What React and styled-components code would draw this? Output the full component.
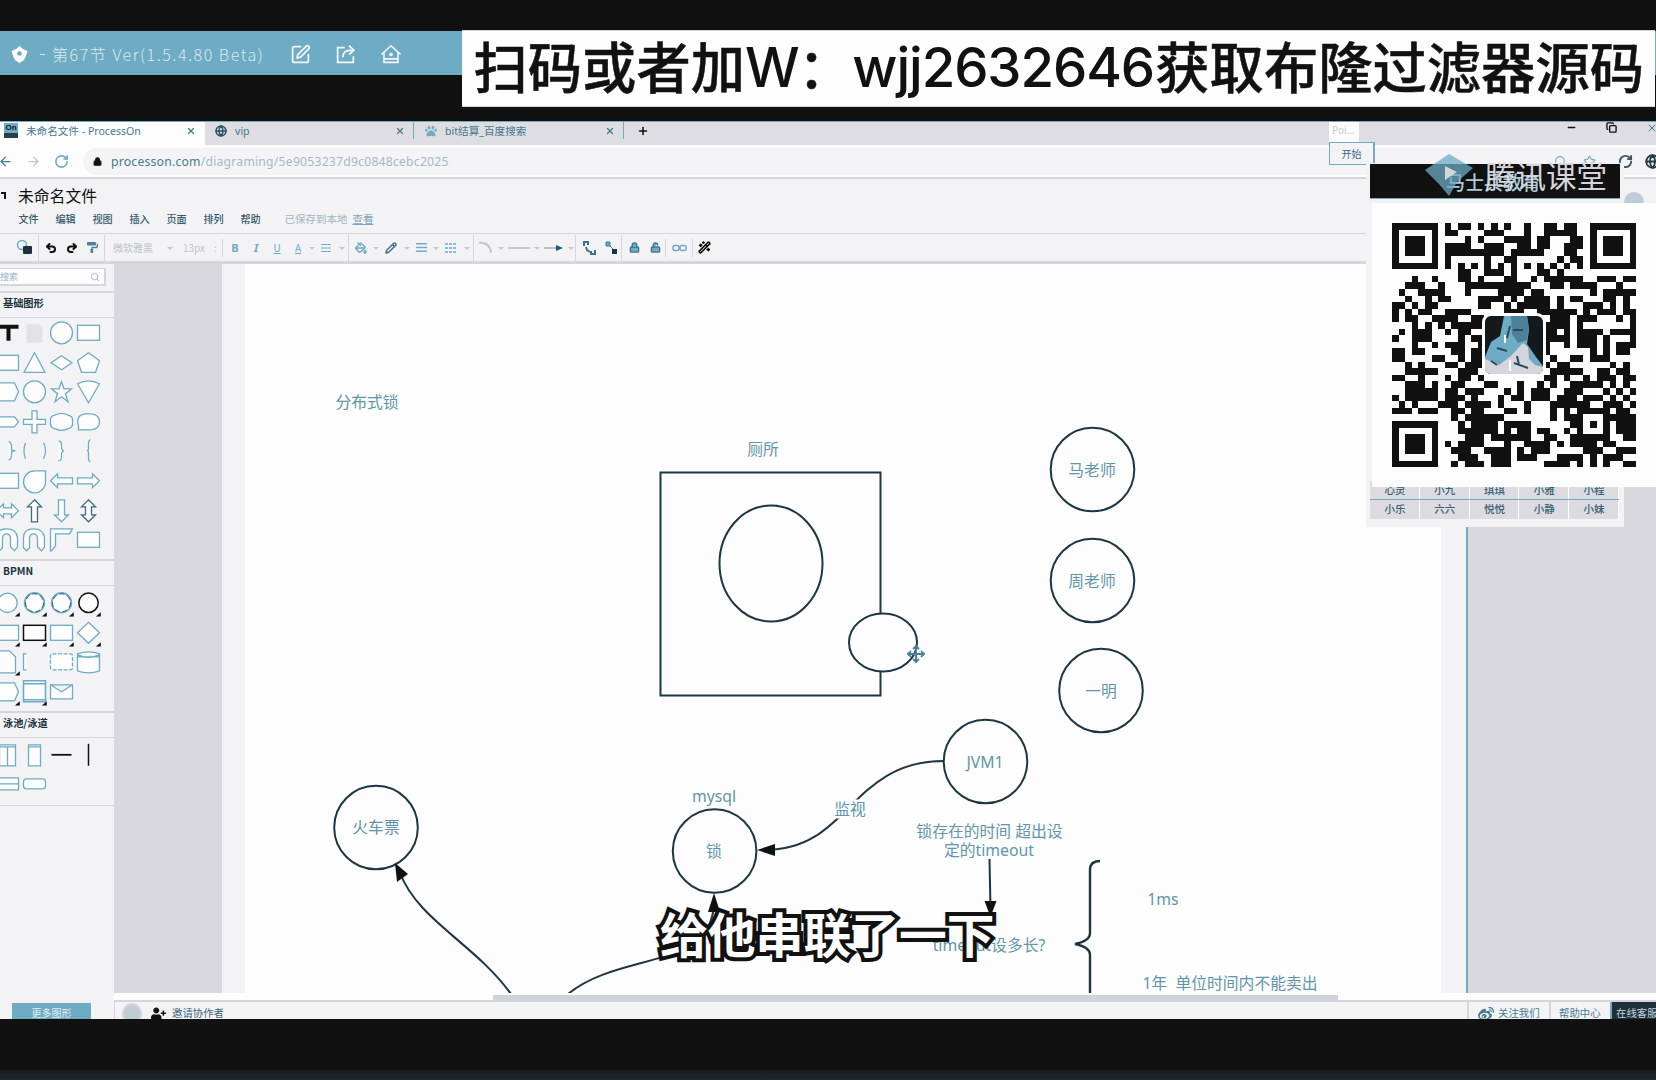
import React from "react";
import styled, { createGlobalStyle } from "styled-components";
import {
  SquarePen, Globe, X, Plus, Minus, Copy, ArrowLeft, ArrowRight,
  RotateCw, Lock, LockOpen, Undo2, Redo2, Search, PaintBucket, Pencil, AlignJustify,
  WandSparkles, Star, Move,
} from "lucide-react";
import { FaPaintRoller, FaUserPlus, FaWeibo, FaPaw } from "react-icons/fa";

const INK = "#111111";
const BLUE = "#6eabc4";
const GREY = "#d6d5db";
const PAPER = "#fdfdfd";
const SOFT = "#f3f3f5";

const Global = createGlobalStyle`
  * { box-sizing: border-box; }
  body { margin: 0; background: ${INK}; overflow: hidden;
    font-family: "Noto Sans", "Noto Sans CJK SC", sans-serif; }
  svg { display: block; flex: none; }
`;

const Screen = styled.div`
  position: relative;
  width: 1656px;
  height: 1080px;
  overflow: hidden;
  display: flex;
  flex-direction: column;
  background: ${INK};
  color: ${INK};
`;
const PlayerBar = styled.header`
  margin-top: 31px;
  height: 44px;
  background: ${BLUE};
  display: flex;
  align-items: center;
  padding: 2px 0 0 11px;
  color: #f4f7f9;
`;
const PlayerTitle = styled.div`
  font: 300 16px "Noto Sans CJK SC", sans-serif;
  letter-spacing: 1.55px;
  width: 213px;
  margin-left: 7px;
  white-space: nowrap;
  color: #dde8ee;
`;
const PlayerDash = styled.span`
  width: 5px;
  height: 1px;
  margin-left: 12px;
  background: #dde8ee;
`;
const PlayerIcons = styled.div`
  display: flex;
  gap: 24px;
  margin-left: 25px;
`;
const Banner = styled.div`
  position: absolute;
  left: 462px;
  top: 30px;
  width: 1193px;
  height: 77px;
  padding-left: 11.5px;
  background: ${PAPER};
  border: solid ${GREY};
  border-width: 1px 0;
  display: flex;
  align-items: center;
  white-space: nowrap;
  font: 500 54.3px/72px "Noto Sans CJK SC", sans-serif;
  padding-bottom: 7px;
  -webkit-text-stroke: 0.5px ${INK};
`;
const Latin = styled.span`
  font: 500 54.5px/72px Inter, sans-serif;
  width: ${(p) => p.$w}px;
  letter-spacing: ${(p) => p.$ls || 0}px;
  padding-top: 3px;
  -webkit-text-stroke: 0;
`;

const Browser = styled.main`
  margin-top: 46px;
  height: 898px;
  border-top: 1px solid ${BLUE};
  background: ${PAPER};
  display: flex;
  flex-direction: column;
  overflow: hidden;
`;
const Tabs = styled.div`
  height: 23px;
  flex: none;
  display: flex;
  background: #dedde2;
`;
const Tab = styled.div`
  width: ${(p) => p.$w}px;
  height: ${(p) => (p.$active ? 23 : 17)}px;
  padding: 0 ${(p) => p.$pr}px ${(p) => (p.$active ? 6 : 0)}px ${(p) => p.$pl}px;
  background: ${(p) => (p.$active ? PAPER : "transparent")};
  border-right: ${(p) => (p.$line ? `1px solid ${BLUE}` : "none")};
  display: flex;
  align-items: center;
  gap: 8px;
  font-size: 10.6px;
  color: #45788f;
  white-space: nowrap;
`;
const TabName = styled.span`
  flex: 1;
`;
const Favicon = styled.span`
  width: 14px;
  height: 15px;
  background: ${BLUE};
  border-bottom: 5px solid #23414d;
  color: ${INK};
  font: 700 8px/10px "Liberation Sans", sans-serif;
  text-align: center;
`;
const WindowButtons = styled.div`
  margin-left: auto;
  display: flex;
  gap: 29px;
  margin-right: -2px;
`;
const AddressRow = styled.div`
  height: 32px;
  flex: none;
  display: flex;
  align-items: center;
  background: ${PAPER};
`;
const NavIcons = styled.div`
  width: 85px;
  display: flex;
  gap: 13px;
  color: #3f7a92;
  margin-left: -2px;
`;
const UrlPill = styled.div`
  height: 27px;
  flex: 1;
  border-radius: 14px 0 0 14px;
  background: #f4f4f6;
  display: flex;
  align-items: center;
  padding-left: 10px;
  gap: 9px;
  font-size: 12.2px;
  color: #a3bac7;
  letter-spacing: 0.22px;
  b { font-weight: 400; color: #467a90; }
`;
const PillIcons = styled.div`
  margin-left: auto;
  display: flex;
  gap: 16px;
  margin-right: 60px;
  color: ${BLUE};
`;
const ExtraIcons = styled.div`
  width: 0;
  display: flex;
  gap: 12px;
  transform: translateX(-38px);
`;
const DocHeader = styled.div`
  height: 57px;
  flex: none;
  border-top: 2px solid ${GREY};
  border-bottom: 1px solid ${GREY};
  background: ${SOFT};
`;
const DocTitle = styled.div`
  height: 29px;
  padding: 4px 0 0 1px;
  display: flex;
  align-items: center;
  gap: 12px;
  font: 400 15.8px/24px "Noto Sans CJK SC", sans-serif;
`;
const BackHook = styled.i`
  width: 5px;
  height: 7px;
  border: solid ${INK};
  border-width: 2px 2px 0 0;
`;
const Menus = styled.div`
  display: flex;
  align-items: center;
  padding: 2px 0 0 18.5px;
  gap: 16.8px;
  font: 500 10.1px/18px "Noto Sans CJK SC", sans-serif;
  color: #355b6c;
`;
const SaveNote = styled.span`
  margin-left: 7px;
  font-weight: 400;
  font-size: 10.5px;
  color: #9fb4c0;
  u { margin-left: 5px; color: #7ea6b8; }
`;
const Toolbar = styled.div`
  height: 30px;
  flex: none;
  border-bottom: 3px solid ${GREY};
  background: ${SOFT};
  display: flex;
  align-items: center;
  padding-left: 10px;
`;
const Cell = styled.span`
  width: ${(p) => p.$w}px;
  height: 26px;
  display: flex;
  align-items: center;
  justify-content: center;
  color: ${(p) => p.$c || BLUE};
  font: ${(p) => p.$f || '400 10px "Noto Sans CJK SC", sans-serif'};
  white-space: nowrap;
`;
const Sep = styled.i`
  width: 1px;
  height: ${(p) => p.$h || 26}px;
  background: ${GREY};
`;
const Caret = styled.i`
  border: 3px solid transparent;
  border-top-color: #c6c8d0;
  transform: translateY(2px);
`;

const Workspace = styled.div`
  height: 738px;
  flex: none;
  display: flex;
`;
const Sidebar = styled.aside`
  width: 114px;
  flex: none;
  background: ${SOFT};
  overflow: hidden;
`;
const SearchBox = styled.div`
  width: 106px;
  height: 18px;
  margin: 4px 0 5px;
  padding-right: 4px;
  border: 1px solid ${GREY};
  border-width: 1px 2px 2px 0;
  background: ${PAPER};
  display: flex;
  align-items: center;
  justify-content: space-between;
  color: #8fb6c7;
  font-size: 9px;
`;
const GroupTitle = styled.div`
  height: 27px;
  border: solid ${GREY};
  border-width: 2px 0 1px;
  padding-left: 3px;
  font: 700 10.2px/20px "Noto Sans CJK SC", sans-serif;
  color: #1c333e;
`;
const ShapeGrid = styled.div`
  display: grid;
  grid-template-columns: repeat(4, 27px);
  grid-auto-rows: 29.6px;
  margin-left: -6.5px;
  padding-top: ${(p) => p.$pt}px;
  height: ${(p) => p.$h}px;
`;
const EndRule = styled.div`
  height: 1px;
  background: ${GREY};
`;
const Canvas = styled.section`
  width: 1542px;
  display: flex;
  flex-direction: column;
  background: ${PAPER};
`;
const Desk = styled.div`
  height: 729px;
  display: flex;
  background: #d9d8dd;
`;
const PageEdge = styled.div`
  width: ${(p) => p.$w}px;
  margin-left: ${(p) => p.$ml || 0}px;
  border-right: ${(p) => (p.$line ? `2px solid ${BLUE}` : "none")};
  background: ${SOFT};
`;
const Page = styled.div`
  position: relative;
  width: 1196px;
  background: ${PAPER};
  overflow: hidden;
`;
const Label = styled.div`
  position: absolute;
  left: ${(p) => p.$x - 245}px;
  top: ${(p) => p.$y - 263}px;
  transform: translate(-50%, -50%);
  background: ${(p) => (p.$bg ? PAPER : "transparent")};
  font: 400 15.8px/19px "Noto Sans", "Noto Sans CJK SC", sans-serif;
  color: #6295ab;
  text-align: center;
  white-space: pre;
`;
const HScroll = styled.div`
  height: 9px;
  padding: 2px 0 0 379px;
  border-bottom: 2px solid ${GREY};
`;
const Thumb = styled.div`
  width: 845px;
  height: 6px;
  background: #cfd3da;
`;
const Footer = styled.footer`
  height: 17px;
  flex: none;
  background: ${SOFT};
  display: flex;
  align-items: flex-start;
  overflow: hidden;
  font: 400 10.4px/22px "Noto Sans CJK SC", sans-serif;
  color: #2f5463;
`;
const MoreShapes = styled.div`
  width: 79px;
  height: 22px;
  margin: 1px 23px 0 12px;
  background: ${BLUE};
  color: #e6edf1;
  text-align: center;
  font-size: 10px;
  line-height: 19px;
`;
const FootAvatar = styled.i`
  width: 20px;
  height: 22px;
  margin: 1px 9px 0 7px;
  border-radius: 50%;
  background: #bccdd6;
  border: 2px solid ${GREY};
`;
const Invite = styled.div`
  display: flex;
  gap: 6px;
  color: #3a6679;
  svg { margin-top: 4px; }
`;
const FootCell = styled.div`
  width: ${(p) => p.$w}px;
  height: 18px;
  padding: 0 0 0 ${(p) => p.$pl}px;
  border-left: 2px solid ${(p) => (p.$dark ? BLUE : GREY)};
  background: ${(p) => (p.$dark ? "#1f3038" : "transparent")};
  color: ${(p) => (p.$dark ? "#c5d6de" : "#477b90")};
  display: flex;
  gap: 4px;
  white-space: nowrap;
  svg { margin-top: 4px; }
`;
const Spacer = styled.div`
  flex: 1;
`;
const BottomFade = styled.div`
  margin-top: auto;
  height: 10px;
  background: linear-gradient(#171d20, #1e2a30);
`;

const StartDialog = styled.div`
  position: absolute;
  left: 1329px;
  top: 122px;
  width: 46px;
  height: 43px;
  display: flex;
  flex-direction: column;
`;
const StartCaption = styled.div`
  height: 20px;
  width: 30px;
  padding-left: 3px;
  background: ${PAPER};
  color: #c5c8cf;
  font-size: 10px;
  line-height: 17px;
`;
const StartButton = styled.div`
  height: 23px;
  background: ${SOFT};
  border: 1px solid ${BLUE};
  border-right-width: 2px;
  text-align: center;
  font-size: 10px;
  line-height: 22px;
  color: #34687e;
`;
const NamePanel = styled.div`
  position: absolute;
  left: 1366px;
  top: 163px;
  width: 258px;
  height: 364px;
  background: ${SOFT};
  padding: 1px 4px 8px;
  display: flex;
  flex-direction: column;
  justify-content: space-between;
`;
const NameHead = styled.div`
  width: 250px;
  height: 35px;
  border-bottom: 1px solid ${BLUE};
  background: ${INK};
`;
const HeadText = styled.div`
  padding: 3px 0 0 76px;
  font: 500 19px/30px "Noto Sans CJK SC", sans-serif;
  color: #a9cbd9;
  white-space: nowrap;
`;
const Names = styled.div`
  display: grid;
  grid-template-columns: repeat(5, 1fr);
  grid-auto-rows: 19px;
  width: 249px;
  background: #dcdbe0;
`;
const Name = styled.div`
  border-bottom: ${(p) => (p.$ruled ? `1px solid ${BLUE}` : "none")};
  box-shadow: inset -1px 0 ${PAPER};
  text-align: center;
  font: 500 10.5px/18px "Noto Sans CJK SC", sans-serif;
  color: #386274;
`;
const Watermark = styled.div`
  position: absolute;
  left: 1425px;
  top: 153px;
  display: flex;
  align-items: center;
  gap: 11px;
  font: 400 30.5px/44px "Noto Sans CJK SC", sans-serif;
  color: #d6d5db;
  white-space: nowrap;
`;
const AccountDot = styled.i`
  position: absolute;
  left: 1624px;
  top: 192px;
  width: 20px;
  height: 20px;
  border-radius: 50%;
  background: #bfccd5;
`;
const QrCard = styled.div`
  position: absolute;
  left: 1372px;
  top: 203px;
  width: 284px;
  height: 284px;
  padding: 20px;
  background: ${PAPER};
`;
const Subtitle = styled.div`
  position: absolute;
  left: 660px;
  top: 898px;
  font: 700 47.8px/70px "Noto Sans CJK SC", sans-serif;
  color: ${PAPER};
  -webkit-text-stroke: 8px ${INK};
  paint-order: stroke fill;
  stroke-linejoin: round;
  white-space: nowrap;
`;

const QR_ROWS = [
  "8 10-11 13 15 17 20 23-24 26-27", "8-9 14-16 20 23-27", "11 13 17-20 22-23 27-28",
  "8-11 14-16 19-20 22-23 26-28", "8-16 18-22 26-27", "8 14 17-18 25 27-28", "",
  "10-11 14-16 18 22-23 25", "3 6 10-11 13 17-18 21 23-28 31-33 35-36",
  "2-4 7 11-20 24-25 27-30 34", "1 4-7 11 16-19 21-22 30 32-36",
  "2 5 7-8 13-16 18 20-23 25 27-28 32-33 35", "0-1 3 5-6 13-14 17 19-23 25 29-31 33 35",
  "0 2 4-5 8-11 17-19 22-27 29 31-33 35-36", "0 2-3 6-9 12-13 24-26 28-30 34 36",
  "3 5 7 9-13 23-26 28 36", "1 3-5 8 10-11 23-24 26 28-31 33-36",
  "0 3-5 10 12-13 23-26 28-30 32 36", "3 6 8-10 13 23 26 28-30 32 34-36",
  "0-1 3-4 9-10 12-13 23 30 32 34-35", "0-1 6-7 10 12-13 24 27-28 30-32",
  "2 4 8-9 11-13 23 25-26 33 35", "2-6 10-12 24-28 31-32 34-35",
  "0-1 4 8 10-11 13 23-24 26 29 31-33 35-36", "2-4 6 9-10 14-15 19 22 24 27-31 33 35",
  "2-6 8-9 11-13 17 19 21-23 26-28 32 34 36", "0 2-6 8-10 12 16 18-19 21-23 25-27 29-31 33 35",
  "1 3 7-9 11-14 16 20 24-29 32-34 36", "0-2 4-6 9-10 12-13 17-18 20 24 26 34-35",
  "9 11-16 24 26-27 33-36", "10 12-15 17-20 27 34-36", "10-15 17 19-20 22-23 26 34-36",
  "11-13 15-20 23-24 27 35-36", "8 10-13 17 20-23 25 27-30 32-33",
  "9-11 14-17 19 21-23 29-31 34-36", "10-12 15-17 19-21 25-28 30 32-34", "9 11-13 15-17 23-26 28 30 32 35-36",
];

function qrPath() {
  const cells = new Set();
  const put = (x, y, w = 1, h = 1) => {
    for (let j = y; j < y + h; j++) for (let i = x; i < x + w; i++) cells.add(`${i},${j}`);
  };
  const cut = (x, y, w, h) => {
    for (let j = y; j < y + h; j++) for (let i = x; i < x + w; i++) cells.delete(`${i},${j}`);
  };
  QR_ROWS.forEach((row, y) =>
    row.split(" ").filter(Boolean).forEach((part) => {
      const [a, b = a] = part.split("-").map(Number);
      put(a, y, b - a + 1);
    })
  );
  for (let i = 8; i <= 28; i += 2) put(i, 6);
  [[0, 0], [30, 0], [0, 30]].forEach(([x, y]) => {
    put(x, y, 7, 7);
    cut(x + 1, y + 1, 5, 5);
    put(x + 2, y + 2, 3, 3);
  });
  put(28, 28, 5, 5);
  cut(29, 29, 3, 3);
  put(30, 30);
  return [...cells].map((c) => `M${c.replace(",", " ")}h1v1h-1z`).join("");
}

function QrCode() {
  return (
    <svg width="244.3" height="244.3" viewBox="0 0 37 37" shapeRendering="crispEdges">
      <path d={qrPath()} fill={INK} />
      <g transform="scale(.15145)" shapeRendering="auto">
        <rect x="90" y="90" width="64" height="64" rx="9" fill={PAPER} />
        <clipPath id="face"><rect x="93" y="93" width="58" height="58" rx="6" /></clipPath>
        <g clipPath="url(#face)">
          <rect x="93" y="93" width="58" height="58" fill="#14191b" />
          <path d="M112 93h23l2 14-2 14 9 13 7 9v9H93v-18l6-15 9-6z" fill={BLUE} />
          <path d="M119 93h16l2 12-2 12-9 3-6-9z" fill="#4d8199" />
          <path d="M93 151v-15l14 6 12-9 12-13 5 4 1 12 6 6 8 2v7z" fill={GREY} />
          <path d="M118 103l-3 12M121 107h10M105 125l10 3M122 140l14 5M125 133l2 9M99 138l6 4" stroke="#294c5b" strokeWidth="2" fill="none" />
          <path d="M118 137v11M113 112v8" stroke={PAPER} strokeWidth="2" />
        </g>
      </g>
    </svg>
  );
}

const SHAPES = {
  text: <path d="M-10-6H11M1-6V8" strokeWidth="4" stroke={INK} />,
  note: <path d="M-8-9H4l4 4V10H-8z" fill="#e2e2e7" stroke="none" />,
  circle: <circle r="11" />,
  rect: <rect x="-11" y="-7.5" width="22" height="15" />,
  triangle: <path d="M0-10 10.500 9.500H-10.500z" />,
  diamond: <path d="M0-7 10.500 0 0 7-10.500 0z" />,
  pentagon: <path d="M0-10 11-2 7 9.500H-7L-11-2z" />,
  octagon: <path d="M-8-9H7l4 9-4 9H-8l-3-9z" />,
  star: <path d="M0-10 2.500-3H10L4 2 6.500 10 0 5-6.500 10-4 2-10-3h7.500z" />,
  cone: <path d="M-11-8Q0-14 11-8L0 11z" />,
  hex: <path d="M-8-5H7l4 5-4 5H-8l-3-5z" />,
  cross: <path d="M-2.500-11h5v8.500H11v5H2.500V11h-5V2.500H-11v-5h8.500z" />,
  cloud: <path d="M-6-7Q0-10 6-7q6 1 5 7 1 6-5 7-6 3-12 0-6-1-5-7-1-6 5-7z" />,
  bubble: <path d="M-10 8v-4Q-13-7-3-8H3Q11-7 11 0 11 7 3 8H-5z" />,
  braces: <path d="M-9-9q-3 0-3 5v8q0 5 3 5M1-9q3 0 3 5v3l3 1-3 1v3q0 5-3 5" />,
  parens: <path d="M-9-8q-3 8 0 16M9-8q4 8 0 16" />,
  rbrace: <path d="M-3-10Q0-10 0-6V-2L2 0 0 2V6q0 4-3 4" />,
  lbrace: <path d="M2-11Q0-11 0-7V-1L-1 0 0 1V7q0 4 2 4" />,
  drop: <path d="M11-10V2a11 11 0 1 1-11-12z" />,
  left: <path d="M-11 0-4-7v4H11v6H-4v4z" />,
  right: <path d="M11 0 4-7v4H-11v6H4v4z" />,
  both: <path d="M-11 0-4-7v4h8v-4l7 7-7 7V3h-8v4z" />,
  up: <path d="M0-11 7-4H3V11h-6V-4h-4z" stroke="#3d6a7c" />,
  down: <path d="M0 11 7 4H3V-11h-6V4h-4z" />,
  upDown: <path d="M0-11 7-4H3v8h4L0 11-7 4h4v-8h-4z" stroke="#3d6a7c" />,
  uturn: <path d="M-11 8V-2q0-9 10-9T10-2V7l-3 4-4-4V-1q0-5-4-5t-4 5V8l-3 3z" />,
  corner: <path d="M-11-11H11l-3 5H-6V6l-4 5h-1z" />,
  ring: <g><circle r="9.500" strokeWidth="2.400" /><circle r="9" stroke="#28495a" strokeWidth=".9" strokeDasharray="5 3" /></g>,
  boldRing: <circle r="9.700" stroke={INK} strokeWidth="1.500" />,
  thinRing: <circle r="9.700" />,
  boldRect: <rect x="-11" y="-7.500" width="22" height="15" stroke={INK} strokeWidth="1.500" />,
  rhomb: <path d="M0-10.500 11 0 0 10.500-11 0z" />,
  file: <path d="M-11-11H2l6 6V11h-19z" />,
  bracket: <path d="M-8-8h-3V8h3" />,
  dashed: <rect x="-11" y="-8" width="22" height="16" rx="2" strokeDasharray="4 1.500" />,
  barrel: <path d="M-11-8q11-4 22 0V9Q0 13-11 9zM-11-5H11M-11-7Q0-2 11-7" />,
  stack: <path d="M-11-11H11V10H-11zM-11-8H11M-11 8H11" strokeWidth="1.600" />,
  mail: <path d="M-11-7H11V7H-11zM-11-7 0 0 11-7" />,
  pool: <path d="M-8-10H8V11H-8zM-8-8H8M0-8V11" />,
  lane: <path d="M-6-10H6V11H-6zM-6-8H6" />,
  hline: <path d="M-10 0H10" strokeWidth="1.800" stroke={INK} />,
  vline: <path d="M0-11V11" strokeWidth="1.500" stroke={INK} />,
  band: <path d="M-11-6H11V6H-11zM-11 0H11" />,
  pill: <rect x="-11" y="-5" width="22" height="10" rx="3" />,
};
const BASIC = "text note circle rect rect triangle diamond pentagon octagon circle star cone hex cross cloud bubble braces parens rbrace lbrace rect drop left right both up down upDown uturn uturn corner rect".split(" ");
const BPMN = "thinRing ring ring boldRing rect boldRect rect rhomb file bracket dashed barrel octagon stack mail".split(" ");
const MARKED = [0, 1, 2, 3, 4, 5, 6, 7, 8, 12, 13];
const LANES = "pool lane hline vline band pill".split(" ");

function Shape({ name, marked }) {
  return (
    <svg width="27" height="29.6" viewBox="-13.5 -14.8 27 29.6" fill={PAPER} stroke={BLUE} strokeWidth="1.3">
      {SHAPES[name]}
      {marked && <path d="M8 13.500 12 10v3.500z" fill={INK} stroke={INK} strokeWidth=".5" />}
    </svg>
  );
}

const Drop = ({ w = 7 }) => <Cell $w={w}><Caret /></Cell>;

function Tools() {
  return (
    <Toolbar>
      <Cell $w={28}><svg width="17" height="17" viewBox="0 0 17 17"><circle cx="6" cy="6" r="4.500" fill="none" stroke={BLUE} strokeWidth="1.500" /><rect x="7" y="7" width="9" height="8" rx="1" fill="#20323a" /></svg></Cell>
      <Sep />
      <Cell $w={24} $c={INK}><Undo2 size={12} strokeWidth={4} /></Cell>
      <Cell $w={18} $c={INK}><Redo2 size={12} strokeWidth={4} /></Cell>
      <Cell $w={23} $c="#4c8199"><FaPaintRoller size={11} /></Cell>
      <Sep />
      <Cell $w={56} $c="#bcc3cc">微软雅黑</Cell>
      <Drop w={18} />
      <Cell $w={30} $c="#bcc3cc">13px</Cell>
      <Cell $w={13} $c="#bcc3cc">:</Cell>
      <Sep $h={18} />
      <Cell $w={24} $f='700 11px "Noto Sans", sans-serif'>B</Cell>
      <Cell $w={18} $f='italic 700 11px "Noto Sans", sans-serif'>I</Cell>
      <Cell $w={24}><u>U</u></Cell>
      <Cell $w={18}><u>A</u></Cell>
      <Drop w={9} />
      <Cell $w={20}><AlignJustify size={12} /></Cell>
      <Drop w={12} />
      <Sep />
      <Cell $w={23}><PaintBucket size={12} strokeWidth={3} /></Cell>
      <Drop />
      <Cell $w={24} $c="#3d748c"><Pencil size={12} strokeWidth={3} /></Cell>
      <Drop />
      <Cell $w={22}><AlignJustify size={13} strokeWidth={3} /></Cell>
      <Drop />
      <Cell $w={22}><svg width="13" height="12"><path d="M1 2h11M1 6h11M1 10h11" stroke={BLUE} strokeWidth="1.500" strokeDasharray="3 1" /></svg></Cell>
      <Drop w={12} />
      <Sep />
      <Cell $w={23}><svg width="14" height="13"><path d="M0 1.500q11 0 12 10" fill="none" stroke="#bdc5ce" strokeWidth="2" /></svg></Cell>
      <Drop />
      <Cell $w={29}><svg width="22" height="4"><path d="M0 2h22" stroke="#c5c9d0" strokeWidth="2" /></svg></Cell>
      <Drop />
      <Cell $w={27}><svg width="20" height="8"><path d="M0 4h13" stroke="#b5c2cc" strokeWidth="2" /><path d="M12 1l7 3-7 3z" fill="#25566b" /></svg></Cell>
      <Drop w={8} />
      <Sep />
      <Cell $w={26}><svg width="13" height="14"><path d="M1 5V1h4v3M12 9v4H8v-3M3 6l1 3 3 2" fill="none" stroke="#3d748c" strokeWidth="2" /></svg></Cell>
      <Cell $w={19}><svg width="13" height="14"><path d="M1 1h4v4H1zM5 5l4 4" fill={BLUE} stroke="#3d748c" /><rect x="7" y="8" width="5" height="5" fill="#20323a" /></svg></Cell>
      <Sep />
      <Cell $w={24} $c="#3d748c"><Lock size={11} fill={BLUE} strokeWidth={3} /></Cell>
      <Cell $w={19} $c="#3d748c"><LockOpen size={11} fill={BLUE} strokeWidth={3} /></Cell>
      <Sep $h={18} />
      <Cell $w={26}><svg width="15" height="8" fill="none" stroke={BLUE} strokeWidth="1.500"><rect x="1" y="1.500" width="6" height="5" rx="2" /><rect x="8" y="1.500" width="6" height="5" rx="2" /></svg></Cell>
      <Sep $h={18} />
      <Cell $w={22} $c={INK}><WandSparkles size={13} strokeWidth={3} /></Cell>
    </Toolbar>
  );
}

const NODES = [[1092.5, 468.5], [1092.5, 579.5], [1101, 689.5], [985.5, 760.5], [714.6, 850], [376, 826.5]];
const LABELS = [
  [367, 401, "分布式锁"], [763, 448, "厕所"], [1092, 468.5, "马老师"], [1092, 579.5, "周老师"],
  [1101, 690, "一明"], [985, 760.5, "JVM1"], [714, 795, "mysql"], [714, 850, "锁"], [376, 826, "火车票"],
  [989.5, 830, "锁存在的时间 超出设"], [989, 849, "定的timeout"], [989, 944, "timeout设多长?"],
  [1163, 898, "1ms"], [1230, 982, "1年  单位时间内不能卖出"],
];

function Diagram() {
  return (
    <Page>
      <svg width="1196" height="729" viewBox="245 263 1196 729" fill="none" stroke="#1c3742" strokeWidth="2">
        <rect x="660.500" y="471.500" width="220" height="223" />
        <ellipse cx="771" cy="562.500" rx="51.500" ry="58" />
        <ellipse cx="883" cy="641.500" rx="34" ry="29" fill={PAPER} />
        {NODES.map(([x, y]) => <circle key={`${x}-${y}`} cx={x} cy={y} r="41.800" />)}
        <path d="M944 760C850 760 850 849 765 849" />
        <path d="M568 993C620 950 714 970 714 900" />
        <path d="M511 993C475 943 418 919 400 872" />
        <path d="M989.500 858 990.500 908" />
        <path d="M1100 860q-10 0-10 9V932q0 8-15 11 15 3 15 11V993" strokeWidth="2.400" />
        <g fill={INK} stroke="none">
          <path d="M757 849l18-6v12zM714 892l-6 19h12zM395 862l2 19 11-8zM990.500 916l-6-16h12z" />
        </g>
      </svg>
      {LABELS.map(([x, y, t]) => <Label key={t} $x={x} $y={y}>{t}</Label>)}
      <Label $x={850} $y={808} $bg>监视</Label>
      <Label $x={916} $y={653}><Move size={19} color="#4b7f95" strokeWidth={2.5} /></Label>
    </Page>
  );
}

const NAMES = ["心灵", "小九", "琪琪", "小雅", "小程", "小乐", "六六", "悦悦", "小静", "小妹"];

export default function App() {
  return (
    <Screen>
      <Global />
      <PlayerBar>
        <svg width="17" height="17" viewBox="0 0 17 17"><path d="M8.500 0 12 3l4.500 2-1.500 5-2 4-4.500 3L4 14 2 10 .5 5 5 3z" fill={PAPER} /><circle cx="8.500" cy="7.500" r="2.300" fill={BLUE} /></svg>
        <PlayerDash />
        <PlayerTitle>第67节 Ver(1.5.4.80 Beta)</PlayerTitle>
        <PlayerIcons>
          <SquarePen size={21} strokeWidth={2} />
          <svg width="21" height="21" viewBox="0 0 24 24" fill="none" stroke="currentColor" strokeWidth="2"><path d="M11 4H3v17h18v-7M9 15q0-8 10-8M16 2l5.500 5L16 12" /></svg>
          <svg width="22" height="21" viewBox="0 0 24 24" fill="none" stroke="currentColor" strokeWidth="1.800"><path d="M1 12 12 2l11 10M4 10v11h16V10M4 17h16" /><circle cx="12" cy="12" r="1.200" /></svg>
        </PlayerIcons>
      </PlayerBar>

      <Browser>
        <Tabs>
          <Tab $w={205} $pl={4} $pr={9} $active>
            <Favicon>On</Favicon><TabName>未命名文件 - ProcessOn</TabName><X size={10} strokeWidth={3} />
          </Tab>
          <Tab $w={209} $pl={10} $pr={8} $line>
            <Globe size={12} strokeWidth={3} color="#2c5364" /><TabName>vip</TabName><X size={10} strokeWidth={3} />
          </Tab>
          <Tab $w={210} $pl={11} $pr={8} $line>
            <FaPaw size={12} color={BLUE} /><TabName>bit结算_百度搜索</TabName><X size={10} strokeWidth={3} />
          </Tab>
          <Tab $w={28} $pl={13} $pr={0}><Plus size={12} strokeWidth={3} color={INK} /></Tab>
          <WindowButtons>
            <Minus size={11} strokeWidth={3} /><Copy size={11} strokeWidth={3} /><X size={12} strokeWidth={2} color="#3d748c" />
          </WindowButtons>
        </Tabs>
        <AddressRow>
          <NavIcons>
            <ArrowLeft size={15} /><ArrowRight size={15} color="#c2c4cc" /><RotateCw size={15} strokeWidth={2.5} color={BLUE} />
          </NavIcons>
          <UrlPill>
            <Lock size={9} fill={INK} strokeWidth={3} color={INK} />
            <span><b>processon.com</b>/diagraming/5e9053237d9c0848cebc2025</span>
            <PillIcons><Search size={13} /><Star size={13} /></PillIcons>
          </UrlPill>
          <ExtraIcons>
            <RotateCw size={15} strokeWidth={3} color="#3b5661" /><Globe size={15} strokeWidth={3} color="#263b44" />
          </ExtraIcons>
        </AddressRow>
        <DocHeader>
          <DocTitle><BackHook />未命名文件</DocTitle>
          <Menus>
            {["文件", "编辑", "视图", "插入", "页面", "排列", "帮助"].map((m) => <span key={m}>{m}</span>)}
            <SaveNote>已保存到本地<u>查看</u></SaveNote>
          </Menus>
        </DocHeader>
        <Tools />
        <Workspace>
          <Sidebar>
            <SearchBox>搜索<Search size={10} /></SearchBox>
            <GroupTitle>基础图形</GroupTitle>
            <ShapeGrid $h={241} $pt={0}>{BASIC.map((n, i) => <Shape key={i} name={n} />)}</ShapeGrid>
            <GroupTitle>BPMN</GroupTitle>
            <ShapeGrid $h={125} $pt={2}>{BPMN.map((n, i) => <Shape key={i} name={n} marked={MARKED.includes(i)} />)}</ShapeGrid>
            <GroupTitle>泳池/泳道</GroupTitle>
            <ShapeGrid $h={67} $pt={1.5}>{LANES.map((n, i) => <Shape key={i} name={n} />)}</ShapeGrid>
            <EndRule />
          </Sidebar>
          <Canvas>
            <Desk>
              <PageEdge $w={23} $ml={108} />
              <Diagram />
              <PageEdge $w={27} $line />
            </Desk>
            <HScroll><Thumb /></HScroll>
          </Canvas>
        </Workspace>
        <Footer>
          <MoreShapes>更多图形</MoreShapes>
          <Sep />
          <FootAvatar />
          <Invite><FaUserPlus size={15} color={INK} />邀请协作者</Invite>
          <Spacer />
          <FootCell $w={82} $pl={9}><FaWeibo size={16} />关注我们</FootCell>
          <FootCell $w={61} $pl={8}>帮助中心</FootCell>
          <FootCell $w={46} $pl={4} $dark>在线客服</FootCell>
        </Footer>
      </Browser>
      <BottomFade />

      <StartDialog>
        <StartCaption>Poi...</StartCaption>
        <StartButton>开始</StartButton>
      </StartDialog>
      <NamePanel>
        <NameHead><HeadText>马士兵教育</HeadText></NameHead>
        <Names>{NAMES.map((n, i) => <Name key={n} $ruled={i < 5}>{n}</Name>)}</Names>
      </NamePanel>
      <AccountDot />
      <Watermark>
        <svg width="49" height="42" viewBox="0 0 49 42"><path d="M24 0 48 14 32 28 24 42 14 30 0 16z" fill={BLUE} opacity=".75" /><path d="M20 12l12 6-12 8z" fill={GREY} /></svg>
        腾讯课堂
      </Watermark>
      <QrCard><QrCode /></QrCard>
      <Banner>
        扫码或者加<Latin $w={53}>W</Latin>：<Latin $w={303} $ls={-1.1}>wjj2632646</Latin>获取布隆过滤器源码
      </Banner>
      <Subtitle>给他串联了一下</Subtitle>
    </Screen>
  );
}
